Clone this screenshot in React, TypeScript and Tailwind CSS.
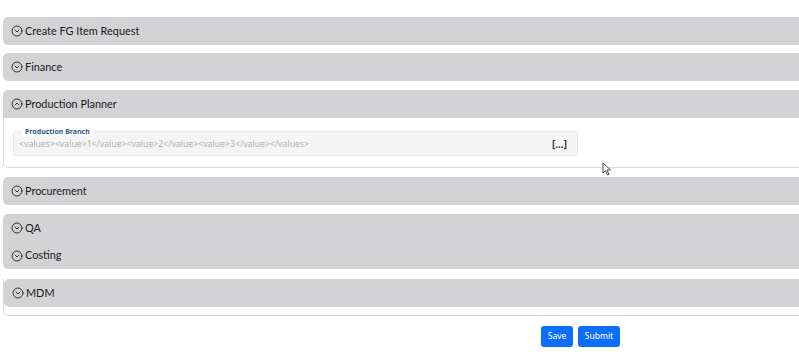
import React from "react";

const ChevDown = () => (
  <svg width="12" height="12" viewBox="0 0 24 24" fill="none" stroke="#222" strokeWidth="1.8" strokeLinecap="round" strokeLinejoin="round" className="shrink-0">
    <circle cx="12" cy="12" r="10" />
    <path d="m16 10-4 4-4-4" />
  </svg>
);
const ChevUp = () => (
  <svg width="12" height="12" viewBox="0 0 24 24" fill="none" stroke="#222" strokeWidth="1.8" strokeLinecap="round" strokeLinejoin="round" className="shrink-0">
    <circle cx="12" cy="12" r="10" />
    <path d="m8 14 4-4 4 4" />
  </svg>
);

const Header = ({ title, open = false, round = "rounded-[5px]", h = "h-[28px]" }: { title: string; open?: boolean; round?: string; h?: string }) => (
  <div className={`${h} bg-[#d3d2d5] flex items-center gap-[2px] pl-[8px] text-[10.9px] text-[#1a1a1a] ${round}`} style={{ fontFamily: 'Lato, "Noto Sans", sans-serif' }}>
    {open ? <ChevUp /> : <ChevDown />}
    <span>{title}</span>
  </div>
);

export default function App() {
  return (
    <div className="w-[799px] h-[359px] overflow-hidden bg-white relative" style={{ fontFamily: '"Noto Sans", "Open Sans", sans-serif' }}>
      <div className="w-[1160px] ml-[3px] pt-[17px]">
        <div className="flex flex-col">
          <Header title="Create FG Item Request" />
          <div className="h-[8px]" />
          <Header title="Finance" />
          <div className="h-[9px]" />
          <div className="flex flex-col">
            <Header title="Production Planner" open round="rounded-t-[5px]" />
            <div className="h-[50px] border border-t-0 border-[#dcdcdc] rounded-b-[5px] pl-[9px] pt-[13px]">
              <div className="relative w-[565px] h-[25px] bg-[#f5f5f5] border border-[#e6e6e6] rounded-[3px] flex items-center pl-[5px] pr-[10px] pt-[2px]">
                <span className="absolute -top-[5px] left-[8px] bg-white px-[3px] text-[7px] leading-[9px] font-bold text-[#2a5a8a]">Production Branch</span>
                <span className="flex-1 text-[8.7px] text-[#b0b0b0] whitespace-nowrap">{"<values><value>1</value><value>2</value><value>3</value></values>"}</span>
                <span className="text-[10px] font-bold text-[#333]">[...]</span>
              </div>
            </div>
          </div>
          <div className="h-[9px]" />
          <Header title="Procurement" />
          <div className="h-[9px]" />
          <div className="flex flex-col">
            <Header title="QA" round="rounded-t-[5px]" />
            <Header title="Costing" round="rounded-b-[5px]" h="h-[27px]" />
          </div>
          <div className="h-[10px]" />
          <div className="h-[37px] border-l border-b border-[#d8d8d8] rounded-bl-[5px]">
            <Header title="MDM" />
          </div>
        </div>
        <div className="flex gap-[5px] ml-[538px] mt-[10px]">
          <button className="w-[32px] h-[21px] bg-[#0d6efd] text-white text-[8.5px] rounded-[3px]">Save</button>
          <button className="w-[42px] h-[21px] bg-[#0d6efd] text-white text-[8.5px] rounded-[3px]">Submit</button>
        </div>
      </div>
      <svg className="absolute left-[602px] top-[162px]" width="10" height="14" viewBox="0 0 10 14">
        <path d="M1 1 L1 11 L3.5 8.7 L5.5 13 L7 12.3 L5 8 L8.5 8 Z" fill="white" stroke="#333" strokeWidth="0.9" strokeLinejoin="round" />
      </svg>
    </div>
  );
}
